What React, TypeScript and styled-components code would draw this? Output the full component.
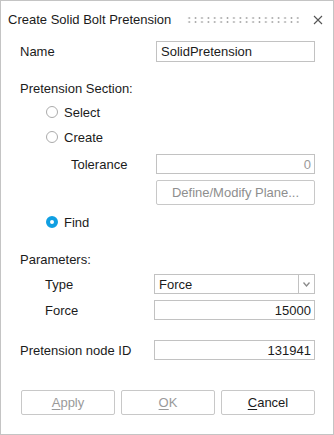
import * as React from 'react'
import styled, { createGlobalStyle } from 'styled-components'

const GlobalStyle = createGlobalStyle`
  html, body {
    margin: 0;
    padding: 0;
    background: #ffffff;
  }
  body {
    font-family: "Liberation Sans", Arial, sans-serif;
    font-size: 13px;
    color: #1b1b1b;
  }
`

const Window = styled.div`
  box-sizing: border-box;
  width: 334px;
  height: 435px;
  border: 1px solid #c4c4c4;
  background: #ffffff;
  display: flex;
  flex-direction: column;
`

const TitleBar = styled.div`
  height: 37px;
  display: flex;
  align-items: center;
  padding: 0 10px 0 7px;
`

const Title = styled.div`
  font-size: 13px;
  color: #1b1b1b;
  white-space: nowrap;
`

const Grip = styled.div`
  flex: 1;
  height: 7px;
  margin: 0 14px 0 15px;
  background-image: radial-gradient(circle, #a8a8a8 0.9px, transparent 1.1px);
  background-size: 6.4px 4px;
  background-position: 0 0;
`

const Body = styled.div`
  display: flex;
  flex-direction: column;
  padding: 0 18px 0 19px;
`

const Row = styled.div<{ $mt: number, $h?: number, $indent?: number }>`
  display: flex;
  align-items: center;
  height: ${p => p.$h || 20}px;
  margin-top: ${p => p.$mt}px;
  padding-left: ${p => p.$indent || 0}px;
`

const Label = styled.span`
  white-space: nowrap;
`

const Field = styled.div<{ $w: number, $h?: number, $align?: string, $disabled?: boolean }>`
  box-sizing: border-box;
  margin-left: auto;
  width: ${p => p.$w}px;
  height: ${p => p.$h || 20}px;
  border: 1px solid #c2c2c2;
  padding: 0 3px 0 4px;
  display: flex;
  align-items: center;
  justify-content: ${p => p.$align === 'right' ? 'flex-end' : 'flex-start'};
  color: ${p => p.$disabled ? '#9a9a9a' : '#1b1b1b'};
  background: #ffffff;
`

const PlaneButton = styled.div`
  box-sizing: border-box;
  margin-left: auto;
  width: 159px;
  height: 25px;
  border: 1px solid #c8c8c8;
  border-radius: 2px;
  display: flex;
  align-items: center;
  justify-content: center;
  color: #8e8e8e;
`

const Radio = styled.span<{ $checked?: boolean }>`
  box-sizing: border-box;
  width: 12px;
  height: 12px;
  border-radius: 50%;
  border: ${p => p.$checked ? '4px solid #109fe2' : '1px solid #ababab'};
  margin-right: 6px;
  background: #ffffff;
`

const Select = styled.div`
  margin-left: auto;
  width: 161px;
  height: 20px;
  display: flex;
`

const SelectValue = styled.div`
  box-sizing: border-box;
  flex: 1;
  border: 1px solid #c2c2c2;
  padding-left: 4px;
  display: flex;
  align-items: center;
`

const SelectArrow = styled.div`
  box-sizing: border-box;
  width: 16px;
  border: 1px solid #c2c2c2;
  border-left: none;
  display: flex;
  align-items: center;
  justify-content: center;
`

const ButtonBar = styled.div`
  display: grid;
  grid-template-columns: repeat(3, 94px);
  column-gap: 6px;
  margin-top: 30px;
  padding-left: 1px;
`

const Button = styled.div<{ $disabled?: boolean }>`
  box-sizing: border-box;
  height: 25px;
  border: 1px solid #c8c8c8;
  border-radius: 2px;
  display: flex;
  align-items: center;
  justify-content: center;
  color: ${p => p.$disabled ? '#9a9a9a' : '#1b1b1b'};
  u {
    text-decoration-thickness: 1px;
    text-underline-offset: 2px;
  }
`

export default function App() {
  return (
    <>
      <GlobalStyle />
      <Window>
        <TitleBar>
          <Title>Create Solid Bolt Pretension</Title>
          <Grip />
          <svg width="10" height="10" viewBox="0 0 10 10">
            <path d="M1 1 L9 9 M9 1 L1 9" stroke="#555" strokeWidth="1.1" fill="none" />
          </svg>
        </TitleBar>
        <Body>
          <Row $mt={3} $h={21}>
            <Label>Name</Label>
            <Field $w={159} $h={21}>SolidPretension</Field>
          </Row>
          <Row $mt={16}>
            <Label>Pretension Section:</Label>
          </Row>
          <Row $mt={4} $indent={26}>
            <Radio />
            <Label>Select</Label>
          </Row>
          <Row $mt={5} $indent={26}>
            <Radio />
            <Label>Create</Label>
          </Row>
          <Row $mt={7} $indent={51}>
            <Label>Tolerance</Label>
            <Field $w={159} $align="right" $disabled={true}>0</Field>
          </Row>
          <Row $mt={6} $h={25}>
            <PlaneButton>Define/Modify Plane...</PlaneButton>
          </Row>
          <Row $mt={7} $indent={26}>
            <Radio $checked={true} />
            <Label>Find</Label>
          </Row>
          <Row $mt={17}>
            <Label>Parameters:</Label>
          </Row>
          <Row $mt={5} $indent={25}>
            <Label>Type</Label>
            <Select>
              <SelectValue>Force</SelectValue>
              <SelectArrow>
                <svg width="7" height="5" viewBox="0 0 7 5">
                  <path d="M0.5 0.5 L3.5 4 L6.5 0.5" stroke="#8a8a8a" strokeWidth="1.3" fill="none" />
                </svg>
              </SelectArrow>
            </Select>
          </Row>
          <Row $mt={6} $indent={25}>
            <Label>Force</Label>
            <Field $w={161} $align="right">15000</Field>
          </Row>
          <Row $mt={20}>
            <Label>Pretension node ID</Label>
            <Field $w={161} $align="right">131941</Field>
          </Row>
          <ButtonBar>
            <Button $disabled={true}><span><u>A</u>pply</span></Button>
            <Button $disabled={true}><span><u>O</u>K</span></Button>
            <Button><span><u>C</u>ancel</span></Button>
          </ButtonBar>
        </Body>
      </Window>
    </>
  )
}
